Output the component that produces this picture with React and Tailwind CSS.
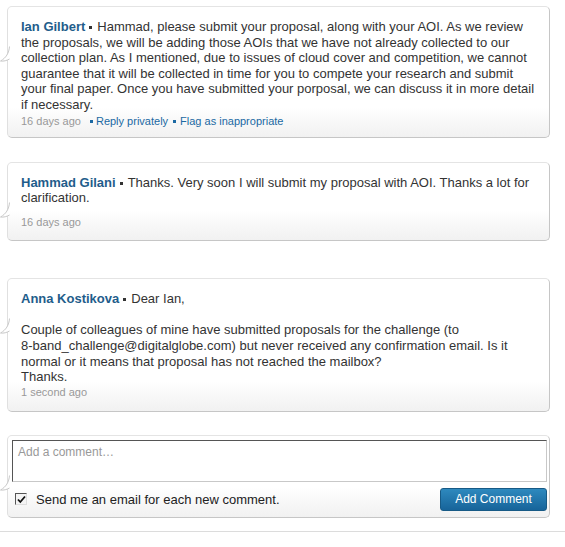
import React, { useState } from 'react';

const comments = [
  {
    name: 'Ian Gilbert',
    body: [
      'Hammad, please submit your proposal, along with your AOI. As we review the proposals, we will be adding those AOIs that we have not already collected to our collection plan. As I mentioned, due to issues of cloud cover and competition, we cannot guarantee that it will be collected in time for you to compete your research and submit your final paper. Once you have submitted your porposal, we can discuss it in more detail if necessary.',
    ],
    when: '16 days ago',
    actions: true,
    box: 'mt-[6px] pb-[9px]',
    dateGap: 'mt-[2px]',
  },
  {
    name: 'Hammad Gilani',
    body: ['Thanks. Very soon I will submit my proposal with AOI. Thanks a lot for clarification.'],
    when: '16 days ago',
    actions: false,
    box: 'mt-[24px] pb-[11px]',
    dateGap: 'mt-[10px]',
  },
  {
    name: 'Anna Kostikova',
    body: [
      'Dear Ian,',
      '',
      <>
        Couple of colleagues of mine have submitted proposals for the challenge (to{' '}
        <span className="whitespace-nowrap">8-band_challenge@digitalglobe.com)</span> but never received
        any confirmation email. Is it normal or it means that proposal has not reached the mailbox?
      </>,
      'Thanks.',
    ],
    when: '1 second ago',
    actions: false,
    box: 'mt-[37px] pb-[12px]',
    dateGap: 'mt-[1px]',
  },
];

// little tail on the left side of every bubble
function Tail() {
  return (
    <svg
      className="absolute left-[-8px] top-[39px]"
      width="10"
      height="17"
      viewBox="0 0 10 17"
    >
      <path
        d="M9.5 0.5 C9 7 6 12 0.5 15 C3.5 15.5 7 14.5 9.5 13"
        fill="#ffffff"
        stroke="#c8c8c8"
        strokeWidth="1"
      />
    </svg>
  );
}

function Bubble({ className = '', children }) {
  return (
    <div
      className={`relative rounded-[5px] border border-t-[#e4e4e4] border-l-[#e0e0e0] border-r-[#c6c6c6] border-b-[#c6c6c6] bg-[linear-gradient(#ffffff_calc(100%_-_30px),#f1f1f1)] ${className}`}
    >
      <Tail />
      {children}
    </div>
  );
}

function Dot({ color = 'bg-[#333]', className = '' }) {
  return <span className={`inline-block w-[3px] h-[3px] align-middle ${color} ${className}`} />;
}

export default function App() {
  const [text, setText] = useState('');
  const [notify, setNotify] = useState(true);

  return (
    <div className="w-[565px] h-[547px] bg-white font-['Liberation_Sans',Arial,sans-serif] text-[13px] leading-[15.6px] text-[#333]">
      <div className="ml-[7px] w-[543px]">
        {comments.map((c, i) => (
          <Bubble key={i} className={`pt-[12px] pl-[13px] pr-[8px] ${c.box}`}>
            <div>
              <a href="#" className="font-bold text-[#1f5d8b] mr-[4px]">{c.name}</a>
              <Dot className="mr-[5px]" />
              {c.body.map((line, j) => (
                <React.Fragment key={j}>
                  {j > 0 && <br />}
                  {line}
                </React.Fragment>
              ))}
            </div>
            <div className={`text-[11px] leading-[13.2px] ${c.dateGap}`}>
              <span className="text-[#999]">{c.when}</span>
              {c.actions && (
                <>
                  <Dot color="bg-[#1b69a3]" className="ml-[9px] mr-[3px]" />
                  <a href="#" className="text-[#1b69a3]">Reply privately</a>
                  <Dot color="bg-[#1b69a3]" className="ml-[5px] mr-[4px]" />
                  <a href="#" className="text-[#1b69a3]">Flag as inappropriate</a>
                </>
              )}
            </div>
          </Bubble>
        ))}

        {/* add comment form */}
        <Bubble className="mt-[23px] pt-[4px] pl-[4px] pr-[2px] pb-[6px]">
          <textarea
            value={text}
            onChange={(e) => setText(e.target.value)}
            placeholder="Add a comment…"
            className="block w-full h-[42px] resize-none border border-t-[#555] border-l-[#555] border-r-[#c8c8c8] border-b-[#c8c8c8] bg-white pt-[4px] px-[5px] text-[12px] leading-[15.6px] text-[#333] placeholder:text-[#999] outline-none"
          />
          <div className="mt-[6px] flex items-center justify-between">
            <label className="flex items-center gap-[9px] pl-[3px] text-[13px] text-[#222] cursor-pointer">
              <input
                type="checkbox"
                checked={notify}
                onChange={(e) => setNotify(e.target.checked)}
                className="hidden"
              />
              <span className="flex items-center justify-center w-[12px] h-[12px] border border-t-[#555] border-l-[#555] border-r-[#ddd] border-b-[#ddd] bg-[#f4f4f4]">
                {notify && (
                  <svg width="9" height="9" viewBox="0 0 9 9">
                    <path d="M1 4.5 L3.3 7 L8 1.5" fill="none" stroke="#111" strokeWidth="1.8" />
                  </svg>
                )}
              </span>
              Send me an email for each new comment.
            </label>
            <button className="w-[107px] h-[23px] rounded-[3px] border border-[#175a86] bg-[linear-gradient(#2e89be,#17649a)] text-[12px] text-white">
              Add Comment
            </button>
          </div>
        </Bubble>
      </div>
      <div className="mt-[13px] h-px bg-[#dcdcdc]" />
    </div>
  );
}
